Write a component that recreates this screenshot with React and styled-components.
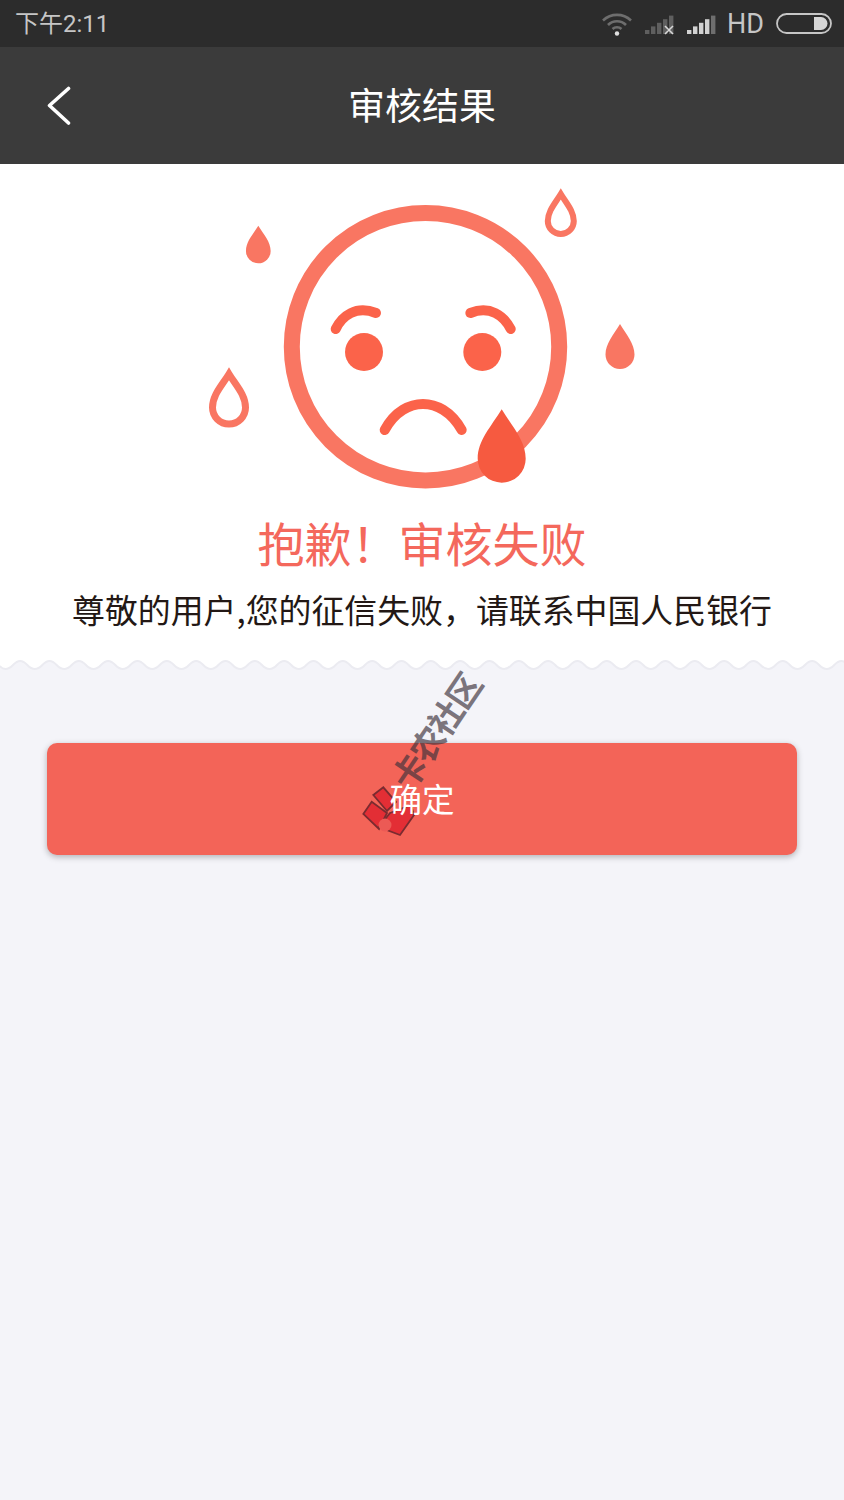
import React from "react";
import styled, { createGlobalStyle } from "styled-components";

const CJK = `"Noto Sans CJK SC", "Noto Sans", sans-serif`;

const GlobalStyle = createGlobalStyle`
  html, body {
    margin: 0;
    padding: 0;
    background-color: #f4f4f9;
  }
`;

const Page = styled.div`
  position: relative;
  display: flex;
  flex-direction: column;
  width: 844px;
  height: 1500px;
  overflow: hidden;
  background-color: #f4f4f9;
  font-family: ${CJK};
`;

const StatusBar = styled.div`
  display: flex;
  align-items: center;
  justify-content: space-between;
  height: 47px;
  padding: 0 12px 0 15px;
  box-sizing: border-box;
  background-color: #2c2c2c;
  color: #c6c6c6;
`;

const Time = styled.span`
  padding-top: 2px;
  font-family: Roboto, ${CJK};
  font-size: 24px;
  line-height: 45px;
  font-weight: 400;
`;

const StatusIcons = styled.div`
  display: flex;
  align-items: center;
  gap: 12px;
`;

const Hd = styled.span`
  padding-top: 2px;
  margin-left: -2px;
  font-family: Roboto, sans-serif;
  font-size: 27px;
  font-weight: 400;
  line-height: 45px;
`;

const Header = styled.header`
  display: grid;
  grid-template-columns: 1fr auto 1fr;
  align-items: center;
  height: 117px;
  background-color: #3b3b3b;
`;

const BackButton = styled.div`
  display: flex;
  align-items: center;
  padding-left: 46px;
`;

const HeaderTitle = styled.h1`
  margin: 0;
  padding-bottom: 4px;
  color: #ffffff;
  font-size: 37px;
  font-weight: 400;
  line-height: 50px;
`;

const Hero = styled.section`
  display: flex;
  flex-direction: column;
  align-items: center;
  padding: 6px 0 29px;
  background-color: #ffffff;
`;

const Illustration = styled.svg`
  display: block;
  align-self: flex-start;
  margin-left: 190px;
`;

const FailTitle = styled.h2`
  margin: 9px 0 0;
  color: #f4685c;
  font-size: 47px;
  font-weight: 400;
  line-height: 66px;
  white-space: nowrap;
`;

const FailText = styled.p`
  margin: 12px 0 0;
  color: #231815;
  font-size: 32.9px;
  line-height: 44px;
  white-space: nowrap;
`;

const Wave = styled.svg`
  display: block;
  flex: none;
`;

const ConfirmButton = styled.div`
  display: flex;
  align-items: center;
  justify-content: center;
  height: 112px;
  margin: 71px 47px 0;
  border-radius: 10px;
  background-color: #f36458;
  box-shadow: 0 2px 6px rgba(0, 0, 0, 0.28);
`;

const ButtonLabel = styled.span`
  position: relative;
  z-index: 2;
  padding-bottom: 3px;
  color: #ffffff;
  font-size: 32.5px;
  line-height: 44px;
`;

const Watermark = styled.div`
  position: absolute;
  z-index: 1;
  left: 360px;
  top: 660px;
  width: 130px;
  height: 180px;
`;

const WatermarkText = styled.span`
  position: absolute;
  left: 10px;
  top: 52px;
  width: 132px;
  color: rgba(60, 50, 60, 0.66);
  font-size: 34px;
  font-weight: 700;
  letter-spacing: -1.5px;
  line-height: 36px;
  white-space: nowrap;
  transform: rotate(-56deg);
`;

const Gift = styled.svg`
  position: absolute;
  left: 0;
  top: 120px;
`;

// teardrop outline from its tip, width and height
const dropPath = (cx, top, w, h) => {
  const r = w / 2;
  const cy = top + h - r;
  return `M${cx} ${top}C${cx - r * 0.45} ${top + h * 0.24} ${cx - r} ${cy - r * 0.75} ${cx - r} ${cy}A${r} ${r} 0 0 0 ${cx + r} ${cy}C${cx + r} ${cy - r * 0.75} ${cx + r * 0.45} ${top + h * 0.24} ${cx} ${top}Z`;
};

const wavePath = () => {
  const period = 29.33;
  let d = "M-3 -4L-3 6.5L0 6.5Q2.5 9 5.5 9";
  // first trough sits at x = 5.5
  for (let x = 5.5; x < 850; x += period) {
    d += `C${x + 7} 9 ${x + 8} 1 ${x + period / 2} 1S${x + period - 7} 9 ${x + period} 9`;
  }
  return `${d}L880 -4Z`;
};

function Face() {
  const line = "#fb634a";
  const soft = "#f97662";
  return (
    <Illustration width="460" height="330" viewBox="0 0 460 330" fill="none">
      <circle cx="235.5" cy="176.7" r="133.7" stroke={soft} strokeWidth="16" />
      <path d={dropPath(68.3, 55.7, 24.7, 37.6)} fill={soft} />
      <path d={dropPath(430, 154, 29, 45)} fill={soft} />
      <path d={dropPath(370.8, 24, 26, 40)} stroke={soft} strokeWidth="6" />
      <path d={dropPath(39, 204, 33, 50)} stroke={soft} strokeWidth="7" />
      <circle cx="174" cy="182" r="19" fill={line} />
      <circle cx="292.3" cy="182" r="19" fill={line} />
      <g stroke={line} strokeWidth="10" strokeLinecap="round">
        <path d="M145.7 159C152 146 166 135 186 143" />
        <path d="M320.7 159C314 146 300 135 280.4 143" />
        <path d="M194.7 260C205 241 220 234 233 234C246 234 261 241 271.7 260" />
      </g>
      <path d={dropPath(311.7, 239.3, 48, 73.4)} fill="#f65a40" />
    </Illustration>
  );
}

function SignalBars({ color, empty, cross }) {
  const bars = [0, 1, 2, 3, 4];
  return (
    <svg width="30" height="22" viewBox="0 0 30 22">
      {bars.map((i) => (
        <rect
          key={i}
          x={i * 6}
          y={17 - i * 3.6}
          width="4.4"
          height={4 + i * 3.6}
          fill={i === 4 ? empty : color}
        />
      ))}
      {cross && <path d="M20 13L28 21M28 13L20 21" stroke="#d8d8d8" strokeWidth="1.6" />}
    </svg>
  );
}

export default function App() {
  return (
    <Page>
      <GlobalStyle />
      <StatusBar>
        <Time>下午2:11</Time>
        <StatusIcons>
          <svg width="32" height="24" viewBox="0 0 32 24" fill="none" stroke="#6e6e6e" strokeWidth="2.6">
            <path d="M2 8.5C10 1 22 1 30 8.5" />
            <path d="M7 13C12 8 20 8 25 13" />
            <path d="M11.5 17C14 14.6 18 14.6 20.5 17" />
            <circle cx="16" cy="21.5" r="2.2" fill="#e0e0e0" stroke="none" />
          </svg>
          <SignalBars color="#5f5f5f" empty="#5f5f5f" cross />
          <SignalBars color="#d2d2d2" empty="#6e6e6e" />
          <Hd>HD</Hd>
          <svg width="56" height="21" viewBox="0 0 56 21" fill="none">
            <rect x="1" y="1" width="54" height="19" rx="9.5" stroke="#c6c6c6" strokeWidth="1.8" />
            <path d="M38 4H45A6.5 6.5 0 0 1 45 17H38Z" fill="#d6d6d6" />
          </svg>
        </StatusIcons>
      </StatusBar>

      <Header>
        <BackButton>
          <svg width="26" height="40" viewBox="0 0 26 40" fill="none">
            <path d="M22.5 2.5L3.5 19.5L22.5 37" stroke="#ffffff" strokeWidth="3.6" strokeLinecap="round" strokeLinejoin="round" />
          </svg>
        </BackButton>
        <HeaderTitle>审核结果</HeaderTitle>
      </Header>

      <Hero>
        <Face />
        <FailTitle>抱歉！审核失败</FailTitle>
        <FailText>尊敬的用户,您的征信失败，请联系中国人民银行</FailText>
      </Hero>

      <Wave width="844" height="12" viewBox="0 0 844 12">
        <path d={wavePath()} fill="#ffffff" stroke="#ebebf1" strokeWidth="2" />
      </Wave>

      <ConfirmButton>
        <ButtonLabel>确定</ButtonLabel>
      </ConfirmButton>

      <Watermark>
        <WatermarkText>卡农社区</WatermarkText>
        <Gift width="60" height="60" viewBox="0 0 60 60" fill="#e32e35" stroke="#7a2b30" strokeWidth="1.8">
          <path d="M13.3 15L23.3 7.3L36 22L27 31Z" />
          <path d="M3.3 34L11.7 21.7L27 33L19 49Z" />
          <path d="M30 33L51 25L54 35L40 55L19 47Z" />
          <circle cx="25" cy="45" r="6.5" fill="#ec5a55" stroke="none" />
        </Gift>
      </Watermark>
    </Page>
  );
}
